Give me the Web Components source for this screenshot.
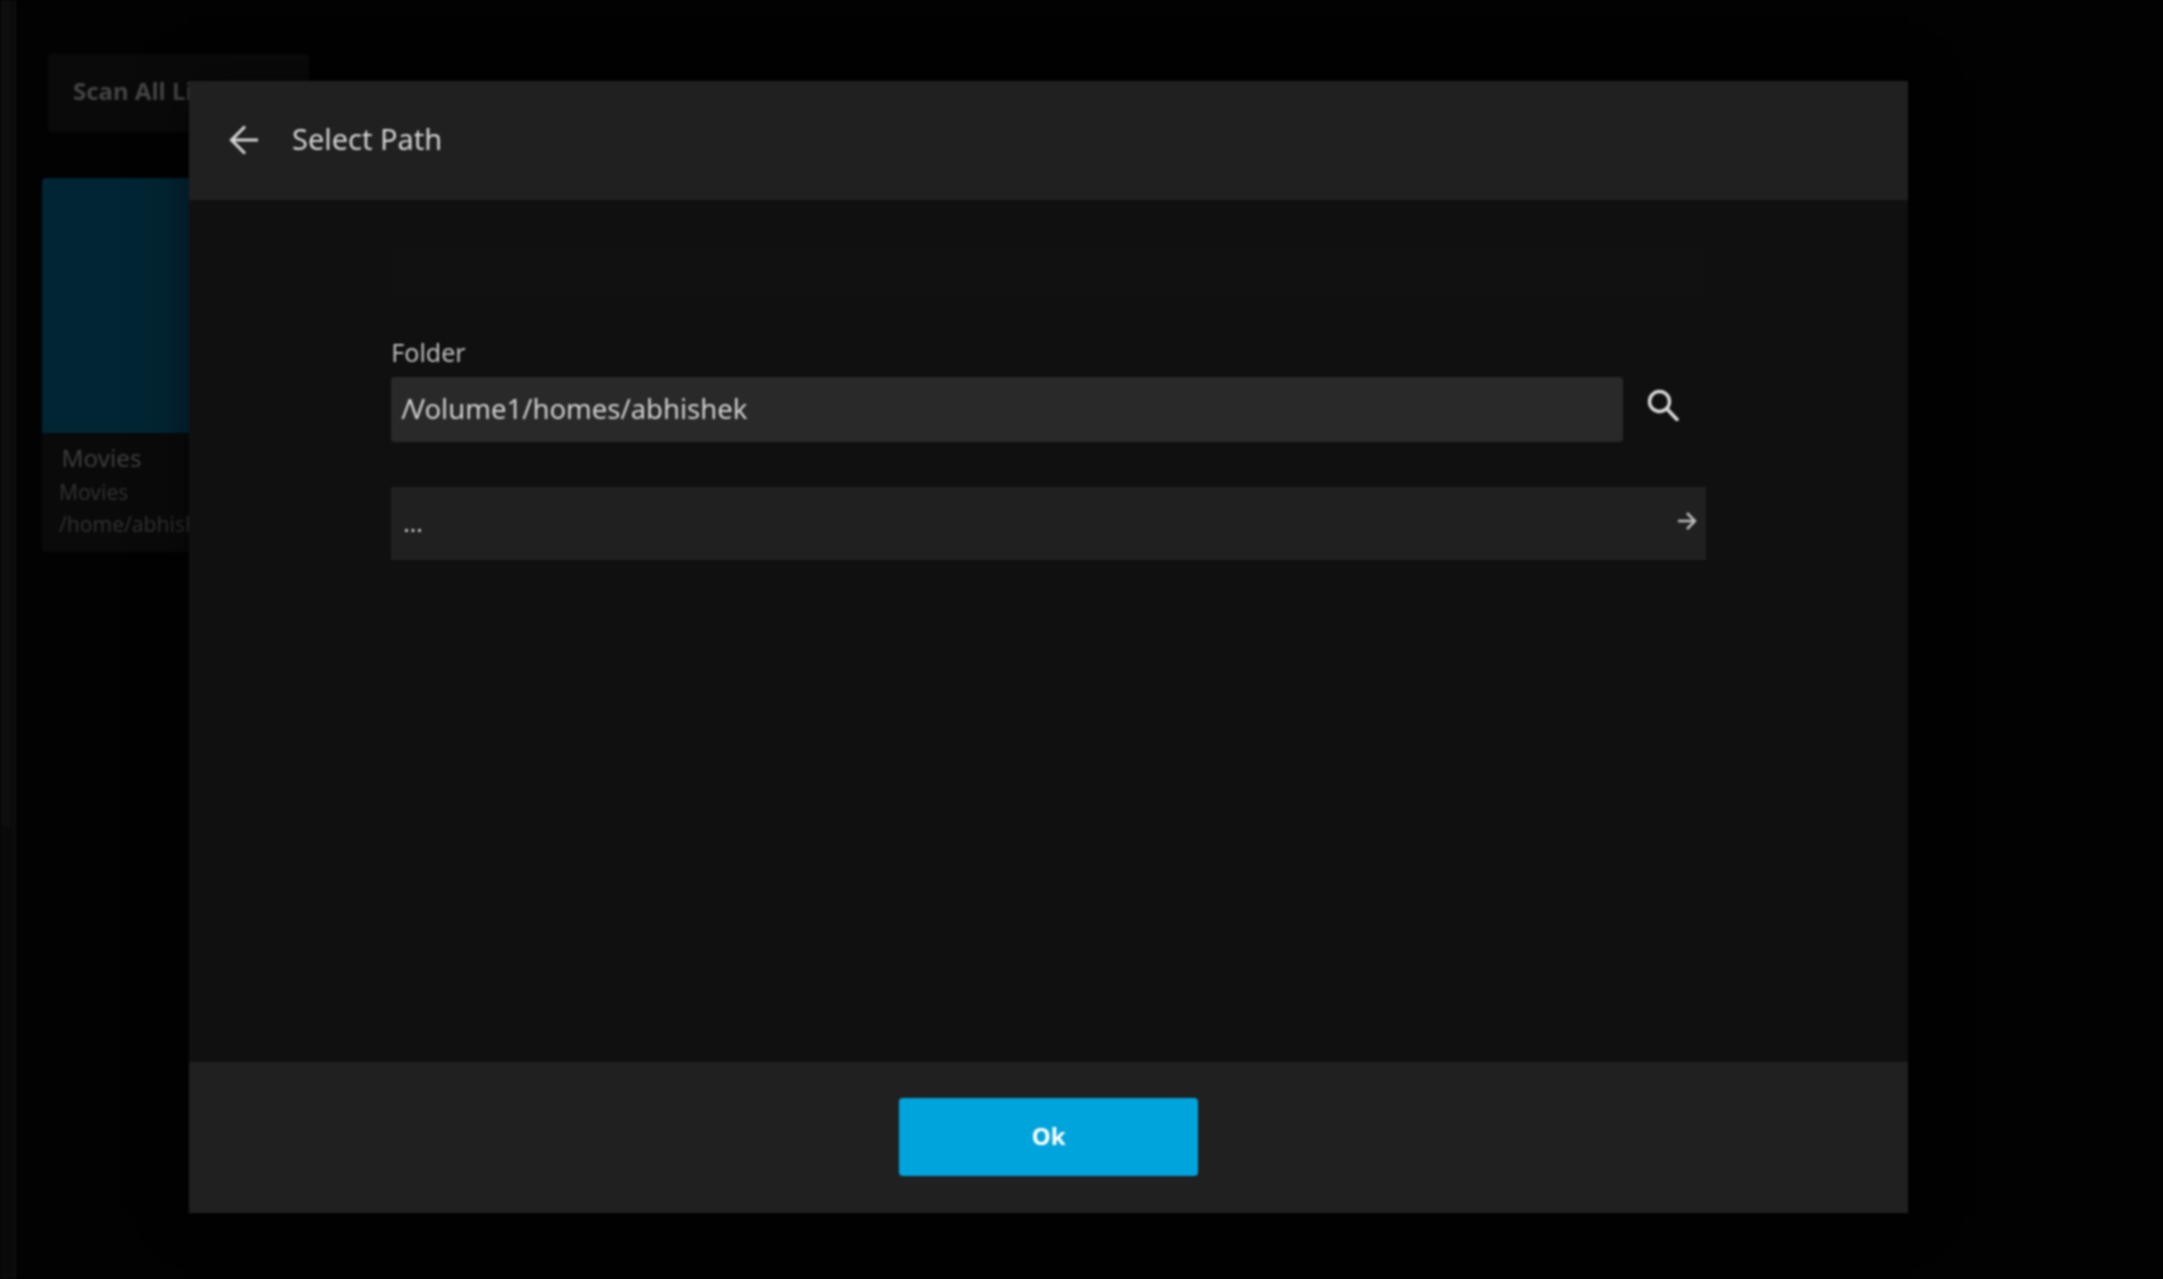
<!DOCTYPE html>
<html><head><meta charset="utf-8">
<style>
html,body{margin:0;height:100%;background:#000;overflow:hidden}
body{font-family:"Noto Sans",sans-serif}
</style></head><body>
<app-shell>
  <library-button slot="bg">Scan All Libraries</library-button>
  <library-card slot="bg" name="Movies" kind="Movies" path="/home/abhishek"></library-card>
  <path-dialog slot="dialog" heading="Select Path">
    <folder-field label="Folder" value="Volume1/homes/abhishek"></folder-field>
    <dir-row>...</dir-row>
    <ok-button slot="footer">Ok</ok-button>
  </path-dialog>
</app-shell>
<script>
function def(name,html,init){
  customElements.define(name,class extends HTMLElement{
    constructor(){super();this.attachShadow({mode:'open'}).innerHTML=html;}
    connectedCallback(){if(init)init(this,this.shadowRoot);}
  });
}
const BACK=`<svg width="32" height="32" viewBox="0 0 32 32" fill="none" stroke="currentColor" stroke-width="3.1"><path d="M30 16H3.5M17 2.5 3.5 16 17 29.5"/></svg>`;
const FWD=`<svg width="20" height="20" viewBox="0 0 20 20" fill="none" stroke="currentColor" stroke-width="2.5"><path d="M1 10h16M10 2l8 8-8 8"/></svg>`;
const SEARCH=`<svg width="32" height="32" viewBox="0 0 32 32" fill="none" stroke="currentColor" stroke-width="3.4"><circle cx="12.5" cy="12.5" r="10"/><path d="M20 20l10 10.5" stroke-width="3.6" stroke-linecap="round"/></svg>`;

def('app-shell',`<style>
:host{display:flex;height:1279px;width:2163px;position:relative;overflow:hidden;background:#020202;color:#444;filter:blur(.8px)}
.rail{width:14px;flex:none;background:#0a0a0a;padding:0 2px 0 1px;box-sizing:border-box}
.thumb{width:10px;height:827px;background:#0e0e0e;border-radius:0 0 4px 4px}
.line{width:2px;flex:none;background:#0f0f0f}
.main{flex:1;padding:53.5px 0 0 25.5px;display:flex;flex-direction:column;gap:46px;align-items:flex-start}
.overlay{position:absolute;left:189.3px;top:81px}
</style><div class="rail"><div class="thumb"></div></div><div class="line"></div>
<div class="main"><slot name="bg"></slot></div><div class="overlay"><slot name="dialog"></slot></div>`);

def('library-button',`<style>
:host{display:flex;align-items:center;box-sizing:border-box;width:261px;height:78px;margin-left:6.5px;padding:0 0 4px 25px;background:#0a0a0a;border-radius:4px;color:#444;font-size:24px;font-weight:700;white-space:nowrap;overflow:hidden}
</style><slot></slot>`);

def('library-card',`<style>
:host{display:flex;flex-direction:column;width:300px;height:374px;background:#0a0a0a;border-radius:4px;overflow:hidden}
.img{height:255px;flex:none;background:#022533;border-radius:4px 4px 0 0}
.t{padding:0 0 0 20px;margin-top:8px;font-size:24.3px;line-height:34px;color:#3d3d3d;white-space:nowrap}
.s{position:relative;top:1px;padding-left:17.5px;font-size:21px;line-height:32px;color:#303030;white-space:nowrap}
</style><div class="img"></div><div class="t" id="t"></div><div class="s" id="k"></div><div class="s" id="p"></div>`,
(h,r)=>{r.getElementById('t').textContent=h.getAttribute('name');r.getElementById('k').textContent=h.getAttribute('kind');r.getElementById('p').textContent=h.getAttribute('path');});

def('path-dialog',`<style>
:host{display:flex;flex-direction:column;width:1718.7px;height:1131.7px;background:#101010;box-shadow:0 0 45px rgba(0,0,0,.5)}
header{height:119px;flex:none;background:#202020;display:flex;align-items:center;padding:0 0 0 38.7px;gap:32px;color:#d4d4d4;font-size:29px;box-sizing:border-box}
header span{padding-bottom:4px}
header svg{margin-bottom:2px}
svg{display:block}
.body{flex:1;padding:49px 0 0 202px;display:flex;flex-direction:column;align-items:flex-start}
.ghost{width:1315px;height:47px;background:#111;margin-bottom:39.5px}
footer{height:151px;flex:none;background:#202020;display:flex;align-items:center;justify-content:center}
</style><header>${BACK}<span id="h"></span></header>
<div class="body"><div class="ghost"></div><slot></slot></div>
<footer><slot name="footer"></slot></footer>`,
(h,r)=>{r.getElementById('h').textContent=h.getAttribute('heading');});

def('folder-field',`<style>
:host{display:block;width:1315px}
label{display:block;color:#bdbdbd;font-size:25px;line-height:32px;margin-bottom:9px}
.row{display:flex;align-items:center;gap:24.7px}
.input{width:1231.3px;height:65px;box-sizing:border-box;background:#292929;border-radius:4px;padding:0 10px 2px;display:flex;align-items:center;color:#d0d0d0;font-size:27.5px;white-space:pre}
.slash{letter-spacing:-3px}
svg{display:block;color:#d8d8d8;margin-bottom:8px}
</style><label id="l"></label><div class="row"><div class="input"><span><span class="slash">/</span><span id="v"></span></span></div>${SEARCH}</div>`,
(h,r)=>{r.getElementById('l').textContent=h.getAttribute('label');r.getElementById('v').textContent=h.getAttribute('value');});

def('dir-row',`<style>
:host{display:flex;align-items:center;justify-content:space-between;box-sizing:border-box;width:1315px;height:73.5px;margin-top:45px;background:#202020;padding:0 9px 2px 12px;color:#d0d0d0;font-size:24px}
svg{display:block;color:#bbb;margin-bottom:3px}
</style><span><slot></slot></span>${FWD}`);

def('ok-button',`<style>
:host{display:flex;align-items:center;justify-content:center;box-sizing:border-box;padding-bottom:3px;width:298.4px;height:78px;background:#00a4dc;border-radius:4px;color:#fff;font-size:24px;font-weight:700}
</style><slot></slot>`);
</script>
</body></html>
